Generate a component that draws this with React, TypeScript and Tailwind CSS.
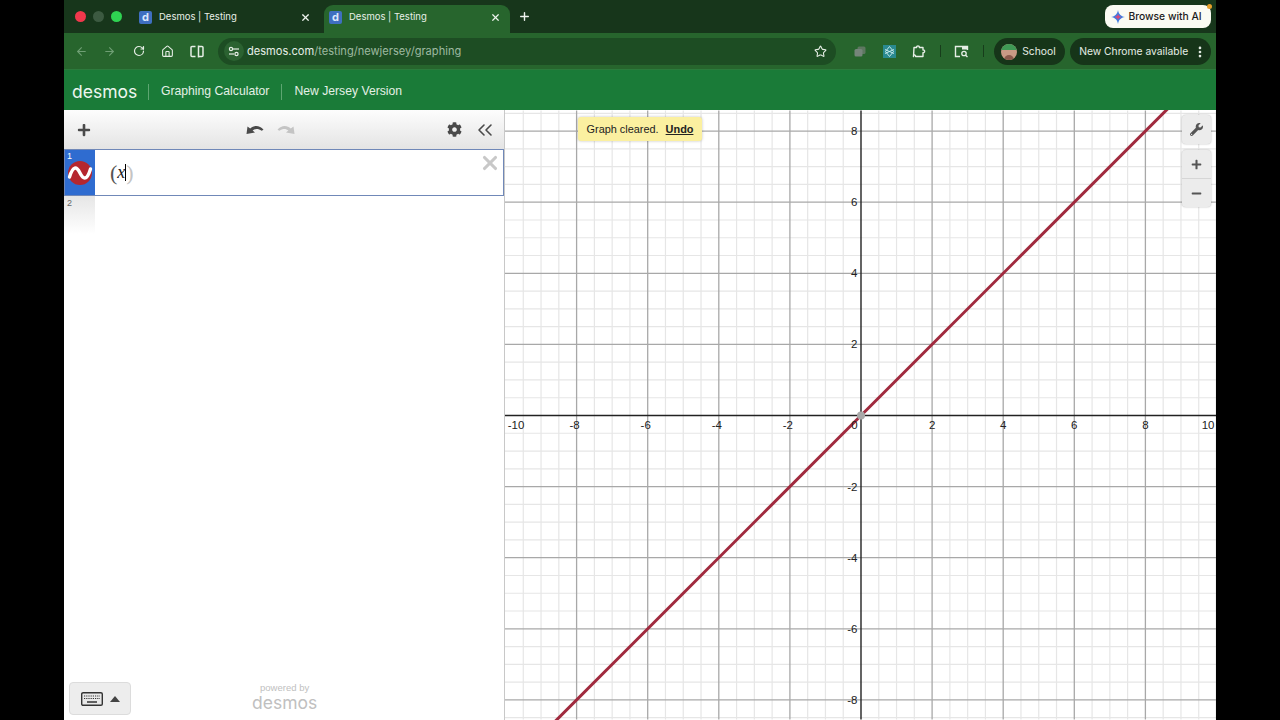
import React from "react";
import { ArrowLeft, ArrowRight, RotateCw, Home, Star, X, Plus, EllipsisVertical, ChevronsLeft } from "lucide-react";
import { FaWrench, FaCog, FaPlus, FaMinus } from "react-icons/fa";

const UNIT = 35.6;
const ORIGIN_X = 356.5;
const ORIGIN_Y = 305.5;
const GRAPH_W = 712;
const GRAPH_H = 610;

const range = (from: number, to: number) => {
  const out: number[] = [];
  for (let i = from; i <= to; i++) out.push(i);
  return out;
};

function Graph() {
  const xs = range(-19, 22).map((i) => ({ i, p: ORIGIN_X + (i * UNIT) / 2 }));
  const ys = range(-20, 20).map((i) => ({ i, p: ORIGIN_Y + (i * UNIT) / 2 }));
  const xLabels = [-8, -6, -4, -2, 2, 4, 6, 8];
  const yLabels = [8, 6, 4, 2, -2, -4, -6, -8];
  return (
    <svg className="block h-full w-full" viewBox={`0 0 ${GRAPH_W} ${GRAPH_H}`}>
      {xs.filter((l) => l.i % 4 !== 0).map((l) => (
        <line key={l.i} x1={l.p} x2={l.p} y1={0} y2={GRAPH_H} stroke="#e6e6e6" strokeWidth="1.2" />
      ))}
      {ys.filter((l) => l.i % 4 !== 0).map((l) => (
        <line key={l.i} y1={l.p} y2={l.p} x1={0} x2={GRAPH_W} stroke="#e6e6e6" strokeWidth="1.2" />
      ))}
      {xs.filter((l) => l.i % 4 === 0 && l.i !== 0).map((l) => (
        <line key={l.i} x1={l.p} x2={l.p} y1={0} y2={GRAPH_H} stroke="#a8a8a8" strokeWidth="1.3" />
      ))}
      {ys.filter((l) => l.i % 4 === 0 && l.i !== 0).map((l) => (
        <line key={l.i} y1={l.p} y2={l.p} x1={0} x2={GRAPH_W} stroke="#a8a8a8" strokeWidth="1.3" />
      ))}
      <line x1={ORIGIN_X} x2={ORIGIN_X} y1={0} y2={GRAPH_H} stroke="#222" strokeWidth="1.4" />
      <line y1={ORIGIN_Y} y2={ORIGIN_Y} x1={0} x2={GRAPH_W} stroke="#222" strokeWidth="1.4" />
      <line
        x1={ORIGIN_X - 310}
        y1={ORIGIN_Y + 310}
        x2={ORIGIN_X + 310}
        y2={ORIGIN_Y - 310}
        stroke="#a02a3e"
        strokeWidth="3"
      />
      <circle cx={ORIGIN_X} cy={ORIGIN_Y} r="4" fill="#a8a8a8" />
      <g fontFamily="'Liberation Sans', Arial, sans-serif" fontSize="11.5" fill="#222">
        {xLabels.map((n) => (
          <text key={n} x={ORIGIN_X + n * UNIT - (n < 0 ? 2 : 0)} y={319} textAnchor="middle">
            {n}
          </text>
        ))}
        <text x={11} y={319} textAnchor="middle">-10</text>
        <text x={704} y={319} textAnchor="middle">10</text>
        <text x={350} y={319} textAnchor="middle">0</text>
        {yLabels.map((n) => (
          <text key={n} x={353} y={ORIGIN_Y - n * UNIT + 4} textAnchor="end">
            {n}
          </text>
        ))}
      </g>
    </svg>
  );
}

function Favicon() {
  return (
    <span className="flex h-[13px] w-[13px] shrink-0 items-center justify-center rounded-[2px] bg-[#3f6fc0] text-[11px] font-bold leading-none text-[#dbe7fb]">
      d
    </span>
  );
}

function Tab({ active }: { active?: boolean }) {
  return (
    <div
      className={`flex h-[28px] w-[186px] items-center gap-[7px] rounded-t-[9px] pb-[4px] pl-[5px] pr-[9px] ${
        active ? "bg-[#27652d]" : ""
      }`}
    >
      <Favicon />
      <span className="flex-1 truncate text-[9.5px] text-[#e8efe8]">Desmos | Testing</span>
      <X size={11} strokeWidth={2.6} className="text-[#eef3ee]" />
    </div>
  );
}

function UndoIcon({ flip, color }: { flip?: boolean; color: string }) {
  return (
    <svg width="18" height="13" viewBox="0 0 18 13" className={flip ? "-scale-x-100" : ""}>
      <path d="M0.5 11 L1.5 3.5 L4.2 5.6 C7.5 2.2 13.5 1.6 17.5 6.8 L15.6 7.8 C12.6 5.4 9 5.2 6.6 7.6 L9 9.6 Z" fill={color} />
    </svg>
  );
}

function NumberedLogo() {
  return (
    <svg width="26" height="26" viewBox="0 0 26 26">
      <circle cx="13" cy="13" r="12" fill="#b5272f" />
      <path d="M2.5 17 C6 5.5 9.5 6 13 13 C16.5 20 20 20.5 23.5 9" fill="none" stroke="#fff" strokeWidth="3.4" strokeLinecap="round" />
    </svg>
  );
}

function KeyboardIcon() {
  return (
    <svg width="22" height="14" viewBox="0 0 22 14">
      <rect x="0.7" y="0.7" width="20.6" height="12.6" rx="1.4" fill="#e8e8e8" stroke="#333" strokeWidth="1.4" />
      <path d="M3 4h16M3 6.5h16" stroke="#333" strokeWidth="1.2" strokeDasharray="1.2 1" />
      <path d="M6 10h10" stroke="#333" strokeWidth="1.5" />
    </svg>
  );
}

export default function App() {
  return (
    <div className="flex h-[720px] w-[1280px] justify-center overflow-hidden bg-black font-['Liberation_Sans',Arial,sans-serif]">
      <div className="flex w-[1152px] flex-col">
        {/* chrome tab strip */}
        <div className="flex h-[33px] items-end bg-[#17361b] font-['Inter',sans-serif]">
          <div className="flex h-[33px] w-[70px] items-center gap-[7px] pl-[11px]">
            <span className="h-[11px] w-[11px] rounded-full bg-[#f0384c]" />
            <span className="h-[11px] w-[11px] rounded-full bg-[#3c5a41]" />
            <span className="h-[11px] w-[11px] rounded-full bg-[#2fd352]" />
          </div>
          <Tab />
          <div className="w-[4px]" />
          <Tab active />
          <Plus size={13} strokeWidth={2.6} className="mb-[10px] ml-[8px] text-[#eef3ee]" />
          <div className="relative mb-[5px] ml-auto mr-[5px] flex h-[23px] w-[106px] items-center justify-center gap-[3px] rounded-[8px] bg-[#fbfbf3] pr-[3px] pt-[1px] text-[10.3px] font-medium text-[#1c1c1c]">
            <svg width="14" height="14" viewBox="0 0 12 12">
              <path d="M6 0 C6.6 3.6 8.4 5.4 12 6 C8.4 6.6 6.6 8.4 6 12 C5.4 8.4 3.6 6.6 0 6 C3.6 5.4 5.4 3.6 6 0Z" fill="#3f7de0" />
              <path d="M6 3 C6.3 4.8 7.2 5.7 9 6 C7.2 6.3 6.3 7.2 6 9 C5.7 7.2 4.8 6.3 3 6 C4.8 5.7 5.7 4.8 6 3Z" fill="#d8497a" />
            </svg>
            Browse with AI
            <span className="absolute -right-[1px] -top-[1px] h-[5px] w-[5px] rounded-full bg-[#e8a02c]" />
          </div>
        </div>

        {/* chrome toolbar */}
        <div className="flex h-[36px] items-center bg-[#27652d] pl-[11px] pr-[5px] font-['Inter',sans-serif] text-[#e6eee6]">
          <ArrowLeft size={13} className="text-[#6f9f74]" />
          <ArrowRight size={13} className="ml-[15px] text-[#6f9f74]" />
          <RotateCw size={12} strokeWidth={2.4} className="ml-[17px]" />
          <Home size={13} strokeWidth={2} className="ml-[16px]" />
          <svg width="14" height="13" viewBox="0 0 14 13" className="ml-[16px]">
            <path d="M5.5 1.5H2a1 1 0 0 0-1 1v8a1 1 0 0 0 1 1h3.5M8.5 .5v12M8.5 1.5H12a1 1 0 0 1 1 1v8a1 1 0 0 1-1 1H8.5" fill="none" stroke="currentColor" strokeWidth="1.5" />
          </svg>
          <div className="ml-[14px] flex h-[27px] w-[619px] items-center rounded-full bg-[#1d4d23] pl-[6px] pr-[9px]">
            <span className="flex h-[20px] w-[20px] items-center justify-center rounded-full bg-[#2b6231]">
              <svg width="12" height="11" viewBox="0 0 12 11" fill="none" stroke="currentColor" strokeWidth="1.2">
                <path d="M6 8h-5" />
                <circle cx="3" cy="3" r="1.6" />
                <path d="M5 3h6" />
                <circle cx="8.5" cy="8" r="1.6" />
              </svg>
            </span>
            <span className="ml-[3px] pt-[1px] text-[11.1px] text-[#e8efe8]">
              desmos.com<span className="text-[#9db9a0]">/testing/newjersey/graphing</span>
            </span>
            <Star size={13} className="ml-auto" />
          </div>
          <svg width="12" height="11" viewBox="0 0 12 11" className="ml-[18px]">
            <rect x="3.5" y="0.5" width="8" height="7.5" rx="1.5" fill="#5d7760" />
            <rect x="0.5" y="3" width="8" height="7.5" rx="1.5" fill="#75857a" />
          </svg>
          <span className="ml-[17px] flex h-[13px] w-[13px] items-center justify-center bg-[#2a8a90]">
            <svg width="11" height="11" viewBox="0 0 11 11" fill="none" stroke="#cfeef0" strokeWidth="0.9">
              <path d="M5.5 0.5 L9.5 5.5 L5.5 10.5 L1.5 5.5 Z" />
              <path d="M1 3.5 L10 7.5 M10 3.5 L1 7.5" />
            </svg>
          </span>
          <svg width="14" height="14" viewBox="0 0 14 14" className="ml-[16px]" fill="none" stroke="currentColor" strokeWidth="1.4">
            <path d="M2 3.5 H4.6 C4.4 1.4 7.6 1.4 7.4 3.5 H11 V6 C13.2 5.8 13.2 8.8 11 8.6 V12.5 H3.6 C3.9 10.6 1 10.4 1.5 12.5 Z" strokeLinejoin="round" />
          </svg>
          <span className="ml-[14px] h-[12px] w-[1px] bg-[#173d1b]" />
          <svg width="15" height="13" viewBox="0 0 15 13" className="ml-[13px]">
            <path d="M6 11.5H1.5V1.5H13.5V5" fill="none" stroke="currentColor" strokeWidth="1.4" />
            <rect x="8" y="1.5" width="5.5" height="3" fill="currentColor" />
            <circle cx="10" cy="8.5" r="2.2" fill="none" stroke="currentColor" strokeWidth="1.3" />
            <path d="M11.6 10.2 L13.5 12" stroke="currentColor" strokeWidth="1.3" />
          </svg>
          <span className="ml-[14px] h-[12px] w-[1px] bg-[#173d1b]" />
          <div className="ml-[10px] flex h-[27px] w-[71px] items-center gap-[5px] rounded-full bg-[#163519] pl-[7px] pt-[1px] text-[10.3px]">
            <span className="relative h-[16px] w-[16px] overflow-hidden rounded-full bg-[#c99a85]">
              <span className="absolute left-0 top-0 h-[6px] w-[16px] bg-[#3f9a55]" />
              <span className="absolute bottom-0 left-[3px] h-[5px] w-[10px] rounded-t-full bg-[#8a5a4c]" />
            </span>
            School
          </div>
          <div className="ml-[5px] flex h-[27px] w-[141px] items-center justify-between rounded-full bg-[#163519] pl-[9px] pr-[4px] pt-[1px] text-[10.3px]">
            New Chrome available
            <EllipsisVertical size={14} strokeWidth={2.6} />
          </div>
        </div>

        {/* desmos header */}
        <div className="flex h-[41px] items-center border-t border-[#2c7a3c] bg-[#1a7b38] pl-[8px] pt-[3px] text-[12.2px] text-[#e4f0e6]">
          <span className="w-[64px] font-['Inter',sans-serif] text-[17.5px] leading-none text-[#eef6ef]">desmos</span>
          <span className="ml-[12px] h-[16px] w-px bg-[#5da671]" />
          <span className="ml-[12px]">Graphing Calculator</span>
          <span className="ml-[12px] h-[16px] w-px bg-[#5da671]" />
          <span className="ml-[12px]">New Jersey Version</span>
        </div>

        {/* calculator */}
        <div className="flex min-h-0 flex-1 bg-white">
          <div className="flex w-[441px] shrink-0 flex-col border-r border-[#c8c8c8]">
            <div className="flex h-[39px] items-center bg-gradient-to-b from-[#fdfdfd] to-[#e4e4e4] text-[#4a4a4a]">
              <FaPlus size={14} className="ml-[13px]" />
              <div className="ml-[155px]"><UndoIcon color="#4a4a4a" /></div>
              <div className="ml-[13px]"><UndoIcon flip color="#c4c4c4" /></div>
              <FaCog size={15} className="ml-[152px]" />
              <ChevronsLeft size={24} strokeWidth={1.6} className="ml-[11px]" />
            </div>
            <div className="flex h-[47px] border border-[#7088b8] bg-white">
              <div className="relative flex w-[30px] items-center justify-center bg-[#2f6cd0]">
                <span className="absolute left-[2px] top-0 text-[9px] text-white">1</span>
                <NumberedLogo />
              </div>
              <div className="flex flex-1 items-center pl-[15px] font-['Liberation_Serif',serif] text-[18px] text-[#222]">
                <span className="text-[22px] leading-none text-[#555]">(</span>
                <i>x</i>
                <span className="h-[17px] w-px bg-black" />
                <span className="text-[22px] leading-none text-[#c4c4c4]">)</span>
              </div>
              <X size={22} strokeWidth={3.4} className="mr-[2px] mt-[2px] text-[#c8c8c8]" />
            </div>
            <div className="relative h-[38px] w-[31px] bg-gradient-to-b from-[#e6e6e6] to-white">
              <span className="absolute left-[3px] top-[1px] text-[9px] text-[#666]">2</span>
            </div>
            <div className="mt-auto flex items-end pb-[5px] pl-[5px]">
              <div className="flex h-[33px] w-[62px] items-center justify-center gap-[7px] rounded-[4px] border border-[#dcdcdc] bg-[#ededed]">
                <KeyboardIcon />
                <span className="h-0 w-0 border-x-[5px] border-b-[6px] border-x-transparent border-b-[#444]" />
              </div>
              <div className="mb-[2px] ml-[121px] flex flex-col items-center text-[#c0c0c0]">
                <span className="text-[9.5px] leading-[11px]">powered by</span>
                <span className="font-['Inter',sans-serif] text-[17.5px] leading-[20px]">desmos</span>
              </div>
            </div>
          </div>

          <div className="relative min-w-0 flex-1 overflow-hidden">
            <Graph />
            <div className="absolute left-[73px] top-[7px] flex h-[24px] w-[124px] items-center justify-center gap-[7px] rounded-[3px] bg-[#fbf0a0] text-[10.9px] text-[#222] shadow-[0_0_3px_rgba(0,0,0,0.25)]">
              <span>Graph cleared.</span>
              <span className="font-bold underline">Undo</span>
            </div>
            <div className="absolute left-[677px] top-[5px] flex h-[29px] w-[29px] items-center justify-center rounded-[4px] bg-[#ececec] text-[#555] shadow-[0_0_2px_rgba(0,0,0,0.3)]">
              <FaWrench size={13} />
            </div>
            <div className="absolute left-[677px] top-[40px] flex h-[57px] w-[29px] flex-col rounded-[4px] bg-[#ececec] text-[#555] shadow-[0_0_2px_rgba(0,0,0,0.3)]">
              <div className="flex flex-1 items-center justify-center border-b border-[#d6d6d6]">
                <FaPlus size={11} />
              </div>
              <div className="flex flex-1 items-center justify-center">
                <FaMinus size={11} />
              </div>
            </div>
          </div>
        </div>
      </div>
    </div>
  );
}
